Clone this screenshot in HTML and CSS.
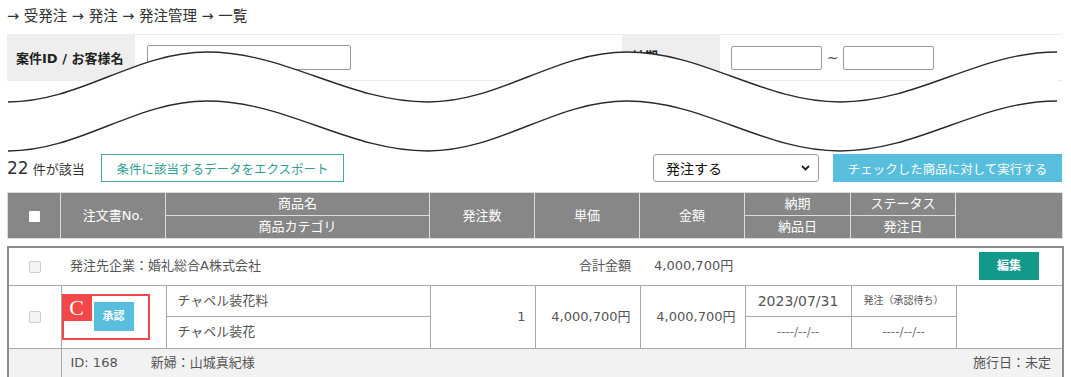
FILE: index.html
```html
<!DOCTYPE html>
<html lang="ja">
<head>
<meta charset="utf-8">
<title>発注一覧</title>
<link rel="stylesheet" href="styles.css">
</head>
<body>
<div class="page">
  <div class="crumb">→ 受発注 → 発注 → 発注管理 → 一覧</div>

  <div class="search-row">
    <div class="label label-id">案件ID / お客様名</div>
    <div class="field field-id"><span class="input input-name"></span></div>
    <div class="label label-date">納期</div>
    <div class="field field-date">
      <span class="input input-date"></span>
      <span class="tilde">~</span>
      <span class="input input-date"></span>
    </div>
  </div>

  <div class="toolbar">
    <div class="count"><span class="num">22</span> 件が該当</div>
    <div class="btn-export">条件に該当するデータをエクスポート</div>
    <div class="select">
      <span>発注する</span>
      <svg class="chev" width="9" height="6" viewBox="0 0 9 6"><path d="M1 1 L4.5 4.5 L8 1" fill="none" stroke="#222" stroke-width="1.8"/></svg>
    </div>
    <div class="btn-run">チェックした商品に対して実行する</div>
  </div>

  <table class="head">
    <colgroup>
      <col class="c1"><col class="c2"><col class="c3"><col class="c4"><col class="c5"><col class="c6"><col class="c7"><col class="c8"><col class="c9">
    </colgroup>
    <tr>
      <th rowspan="2"><span class="chk-white"></span></th>
      <th rowspan="2">注文書No.</th>
      <th>商品名</th>
      <th rowspan="2">発注数</th>
      <th rowspan="2">単価</th>
      <th rowspan="2">金額</th>
      <th>納期</th>
      <th>ステータス</th>
      <th rowspan="2"></th>
    </tr>
    <tr>
      <th>商品カテゴリ</th>
      <th>納品日</th>
      <th>発注日</th>
    </tr>
  </table>

  <table class="body">
    <colgroup>
      <col class="c1"><col class="c2"><col class="c3"><col class="c4"><col class="c5"><col class="c6"><col class="c7"><col class="c8"><col class="c9">
    </colgroup>
    <tr class="r1">
      <td class="cc"><span class="chk"></span></td>
      <td colspan="2" class="company">発注先企業：婚礼総合A株式会社</td>
      <td colspan="2" class="total-label">合計金額</td>
      <td colspan="3" class="total-val">4,000,700円</td>
      <td class="edit-cell"><span class="btn-edit">編集</span></td>
    </tr>
    <tr class="r2">
      <td rowspan="2" class="cc"><span class="chk"></span></td>
      <td rowspan="2" class="order">
        <div class="order-wrap">
          <span class="btn-approve">承認</span>
          <div class="mark"><span class="mark-tag">C</span></div>
        </div>
      </td>
      <td class="name">チャペル装花料</td>
      <td rowspan="2" class="num-r">1</td>
      <td rowspan="2" class="num-r">4,000,700円</td>
      <td rowspan="2" class="num-r">4,000,700円</td>
      <td class="center date">2023/07/31</td>
      <td class="center status">発注（承認待ち）</td>
      <td rowspan="2"></td>
    </tr>
    <tr class="r2">
      <td class="name">チャペル装花</td>
      <td class="center dash">----/--/--</td>
      <td class="center dash">----/--/--</td>
    </tr>
    <tr class="r3">
      <td class="cc"></td>
      <td colspan="8">
        <div class="info">
          <span class="id">ID: 168</span>
          <span class="bride">新婦：山城真紀様</span>
          <span class="day">施行日：未定</span>
        </div>
      </td>
    </tr>
  </table>

  <svg class="tear" width="1071" height="160" viewBox="0 0 1071 160">
    <path fill="#fff" d="M8 102 C80 102 135 52 207 52 C287 52 348 102 428 102 C500 102 555 52 627 52 C704 52 763 102 840 102 C919 102 978 52 1057 52 L1057 101 C978 101 919 151 840 151 C763 151 704 101 627 101 C555 101 500 151 428 151 C348 151 287 101 207 101 C135 101 80 151 8 151 Z"/>
    <path fill="none" stroke="#2a2a2a" stroke-width="1.4" d="M8 102 C80 102 135 52 207 52 C287 52 348 102 428 102 C500 102 555 52 627 52 C704 52 763 102 840 102 C919 102 978 52 1057 52"/>
    <path fill="none" stroke="#2a2a2a" stroke-width="1.4" d="M8 151 C80 151 135 101 207 101 C287 101 348 151 428 151 C500 151 555 101 627 101 C704 101 763 151 840 151 C919 151 978 101 1057 101"/>
  </svg>
</div>
</body>
</html>
```

FILE: styles.css
```css
* { box-sizing: border-box; }

body {
  margin: 0;
  background: #fff;
  color: #333;
  font-family: "DejaVu Sans", "Noto Sans CJK JP", sans-serif;
  font-size: 13px;
}

.page {
  position: relative;
  width: 1055px;
  margin-left: 7px;
}

.crumb {
  padding-top: 6px;
  height: 34px;
  line-height: 20px;
  font-size: 14.5px;
  color: #333;
}

/* search */
.search-row {
  display: flex;
  height: 47px;
  border-top: 1px solid #ececec;
  border-bottom: 1px solid #ececec;
}

.label {
  display: flex;
  align-items: center;
  background: #eee;
  font-weight: bold;
  font-size: 13px;
  color: #222;
}

.label-id { width: 128px; padding-left: 9px; }
.label-date {
  width: 98px;
  padding-left: 10px;
  align-items: flex-start;
  padding-top: 11px;
}

.field {
  display: flex;
  align-items: center;
}

.field-id { width: 487px; padding-left: 12px; }
.field-date { padding-left: 11px; }

.input {
  display: block;
  border: 1px solid #9a9a9a;
  border-radius: 2px;
  background: #fff;
}

.input-name { width: 204px; height: 25px; }
.input-date { width: 91px; height: 24px; }

.tilde {
  width: 21px;
  text-align: center;
  font-size: 14px;
  color: #555;
}

/* toolbar */
.toolbar {
  display: flex;
  align-items: center;
  height: 28px;
  margin-top: 73px;
}

.count {
  width: 94px;
  font-size: 13px;
  color: #333;
}

.count .num { font-size: 17px; }

.btn-export {
  width: 243px;
  height: 28px;
  border: 1px solid #45ad9f;
  color: #2f9f90;
  font-size: 12.5px;
  display: flex;
  align-items: center;
  justify-content: center;
  background: #fff;
}

.select {
  margin-left: auto;
  width: 166px;
  height: 28px;
  border: 1px solid #a0a0a0;
  border-radius: 3px;
  display: flex;
  align-items: center;
  justify-content: space-between;
  padding: 0 8px 0 12px;
  font-size: 14px;
  color: #111;
}

.chev { display: block; }

.btn-run {
  margin-left: 14px;
  width: 229px;
  height: 28px;
  background: #58bedd;
  color: #fff;
  font-size: 12.5px;
  display: flex;
  align-items: center;
  justify-content: center;
}

/* tables */
table {
  width: 1055px;
  border-collapse: collapse;
  table-layout: fixed;
}

.c1 { width: 53px; }
.c2 { width: 105px; }
.c3 { width: 264px; }
.c4 { width: 105px; }
.c5 { width: 105px; }
.c6 { width: 105px; }
.c7 { width: 106px; }
.c8 { width: 105px; }
.c9 { width: 107px; }

.head {
  margin-top: 10px;
}

.head th {
  background: #878787;
  color: #fff;
  font-weight: normal;
  font-size: 13px;
  height: 23px;
  padding: 0;
  border: 1px solid #dcdcdc;
  text-align: center;
  vertical-align: middle;
  line-height: 16px;
}

.chk-white {
  display: inline-block;
  width: 11px;
  height: 11px;
  background: #fff;
  border-radius: 1px;
  vertical-align: middle;
}

.body {
  margin-top: 7px;
  border: 2px solid #8c8c8c;
  color: #555;
}

.body td {
  border: 1px solid #a8a8a8;
  padding: 0;
  vertical-align: middle;
  font-size: 13px;
  line-height: 16px;
}

.cc { text-align: center; }

.chk {
  display: inline-block;
  width: 12px;
  height: 12px;
  border: 1px solid #cfcfcf;
  border-radius: 2px;
  background: #f4f4f4;
  vertical-align: middle;
}

.r1 td {
  height: 38px;
  border-left: none;
  border-right: none;
}

.company { padding-left: 9px !important; }

.total-label {
  text-align: right;
  padding-right: 9px !important;
}

.total-val {
  padding-left: 14px !important;
}

.edit-cell { text-align: center; }

.btn-edit {
  display: inline-flex;
  align-items: center;
  justify-content: center;
  width: 60px;
  height: 28px;
  background: #12998a;
  color: #fff;
  font-weight: bold;
  font-size: 12px;
  vertical-align: middle;
}

.r2 td { height: 31px; }

.order-wrap {
  position: relative;
  height: 62px;
  display: flex;
  align-items: center;
  justify-content: center;
}

.btn-approve {
  display: inline-flex;
  align-items: center;
  justify-content: center;
  width: 40px;
  height: 29px;
  background: #58bedd;
  color: #fff;
  font-weight: bold;
  font-size: 11px;
}

.mark {
  position: absolute;
  left: 0;
  top: 8px;
  width: 88px;
  height: 46px;
  border: 2px solid #f14949;
}

.mark-tag {
  position: absolute;
  left: -2px;
  top: -2px;
  width: 30px;
  height: 27px;
  background: #f14949;
  color: #fff;
  font-family: "Liberation Serif", serif;
  font-size: 22px;
  line-height: 27px;
  text-align: center;
}

.name { padding-left: 11px !important; }

.num-r {
  text-align: right;
  padding-right: 9px !important;
}

.center { text-align: center; }

.date { font-size: 14px !important; }

.status { font-size: 10px !important; }

.dash { font-size: 12px !important; color: #777; }

.r3 td {
  height: 38px;
  background: #f2f2f2;
  vertical-align: top;
  padding-top: 6px;
}

.info {
  display: flex;
  align-items: center;
  padding: 0 11px 0 9px;
}

.bride { margin-left: 33px; }

.day { margin-left: auto; }

.tear {
  position: absolute;
  left: -7px;
  top: 0;
  pointer-events: none;
}
```
